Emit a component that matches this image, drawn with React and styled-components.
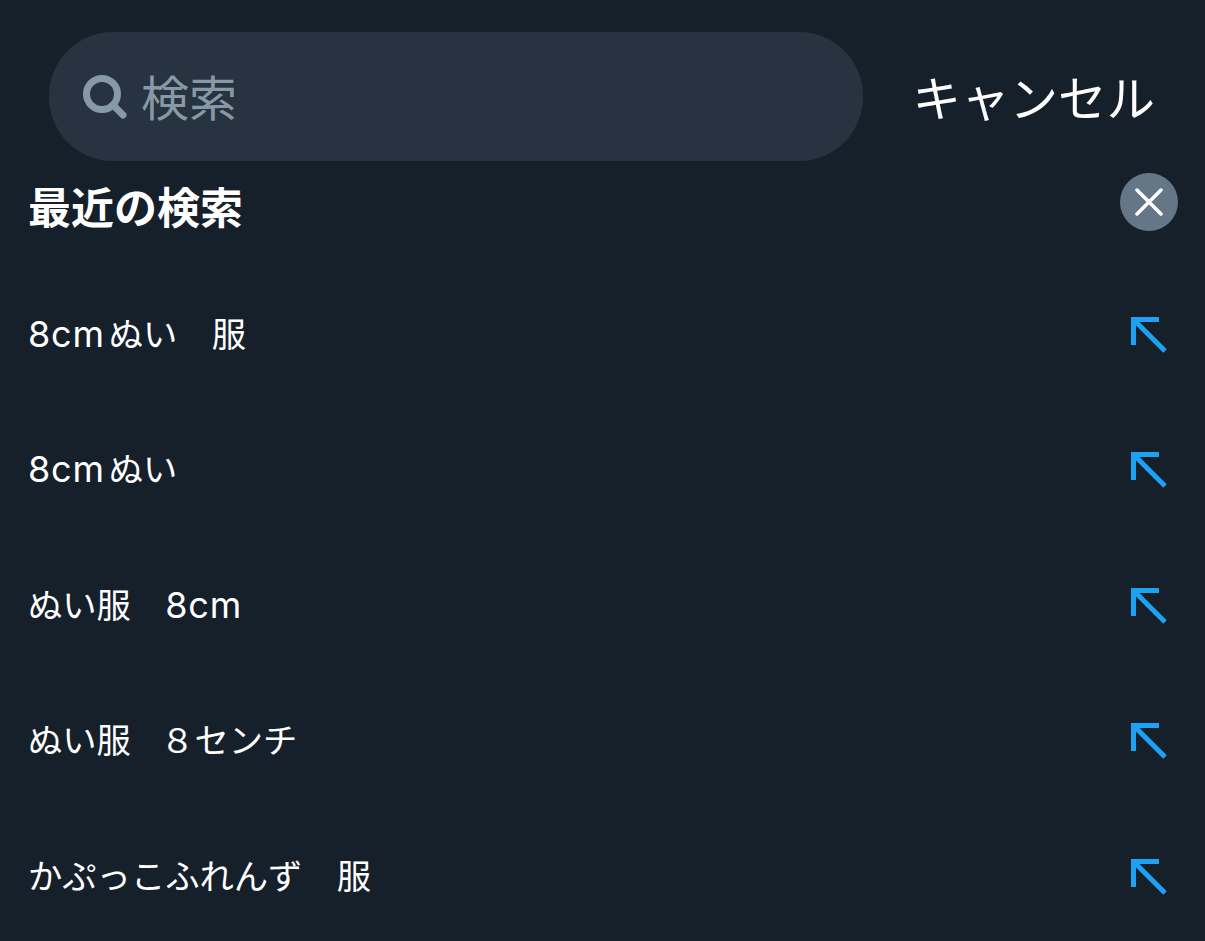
import React from 'react';
import styled, { createGlobalStyle } from 'styled-components';

const GlobalStyle = createGlobalStyle`
  html, body {
    margin: 0;
    padding: 0;
    background: #16202b;
  }
  body {
    font-family: Inter, "Noto Sans CJK JP", sans-serif;
    color: #fff;
  }
`;

const Page = styled.div`
  width: 1205px;
  height: 941px;
  overflow: hidden;
  background: #16202b;
`;

const SearchRow = styled.div`
  display: flex;
  align-items: center;
  padding: 32px 50px 0 49px;
`;

const SearchBar = styled.div`
  width: 814px;
  height: 129px;
  box-sizing: border-box;
  padding-left: 34px;
  display: flex;
  align-items: center;
  gap: 14px;
  background: #273340;
  border-radius: 64px;
`;

const Placeholder = styled.span`
  margin-bottom: 4px;
  font-size: 48px;
  color: #8899a6;
`;

const Cancel = styled.span`
  margin: 8px 0 0 auto;
  font-size: 48.5px;
  line-height: 1;
  color: #fff;
`;

const Header = styled.div`
  height: 82px;
  padding: 0 27px 0 28px;
  display: flex;
  align-items: center;
  justify-content: space-between;
`;

const Title = styled.h2`
  margin: 6px 0 0;
  font-size: 43px;
  font-weight: 700;
`;

const ClearButton = styled.button`
  width: 58px;
  height: 58px;
  padding: 0;
  border: none;
  border-radius: 50%;
  background: #657786;
  display: flex;
  align-items: center;
  justify-content: center;
`;

const List = styled.ul`
  list-style: none;
  margin: 23px 0 0;
  padding: 0;
`;

const Row = styled.li`
  height: 135.5px;
  padding: 0 38px 0 28px;
  display: flex;
  align-items: center;
  justify-content: space-between;
  font-size: 34.3px;
`;

const RowLabel = styled.span`
  margin-bottom: 4px;
`;

const Latin = styled.span`
  font-size: 36px;
  letter-spacing: 0.8px;
  padding-right: 4px;
`;

const TightSpace = styled.span`
  letter-spacing: -5px;
`;

const ArrowIcon = styled.svg`
  margin-top: 2px;
`;

const Arrow = () => (
  <ArrowIcon width="36" height="36" viewBox="0 0 36 36" fill="none" stroke="#1da1f2" strokeWidth="5">
    <path d="M2.5 28V2.5H28" />
    <path d="M3.5 3.5L34 34" />
  </ArrowIcon>
);

const recent = ['8cmぬい　服', '8cmぬい', 'ぬい服　8cm', 'ぬい服　８センチ', 'かぷっこふれんず　服'];

const RowText = ({ text }) => (
  <RowLabel>
    {text.split(/([0-9a-z]+|　(?=８))/).map((part, i) => {
      if (part === '　') return <TightSpace key={i}>{part}</TightSpace>;
      return /^[0-9a-z]+$/.test(part) ? <Latin key={i}>{part}</Latin> : part;
    })}
  </RowLabel>
);

const App = () => (
  <Page>
    <GlobalStyle />
    <SearchRow>
      <SearchBar>
        <svg width="44" height="44" viewBox="0 0 44 44" fill="none" stroke="#8899a6" strokeWidth="7">
          <circle cx="19" cy="19" r="15.5" />
          <path d="M30 30L40 40" strokeLinecap="round" />
        </svg>
        <Placeholder>検索</Placeholder>
      </SearchBar>
      <Cancel>キャンセル</Cancel>
    </SearchRow>
    <Header>
      <Title>最近の検索</Title>
      <ClearButton>
        <svg width="28" height="28" viewBox="0 0 28 28" stroke="#fff" strokeWidth="3.5" strokeLinecap="round">
          <path d="M2 2L26 26M26 2L2 26" />
        </svg>
      </ClearButton>
    </Header>
    <List>
      {recent.map((text) => (
        <Row key={text}>
          <RowText text={text} />
          <Arrow />
        </Row>
      ))}
    </List>
  </Page>
);

export default App;
